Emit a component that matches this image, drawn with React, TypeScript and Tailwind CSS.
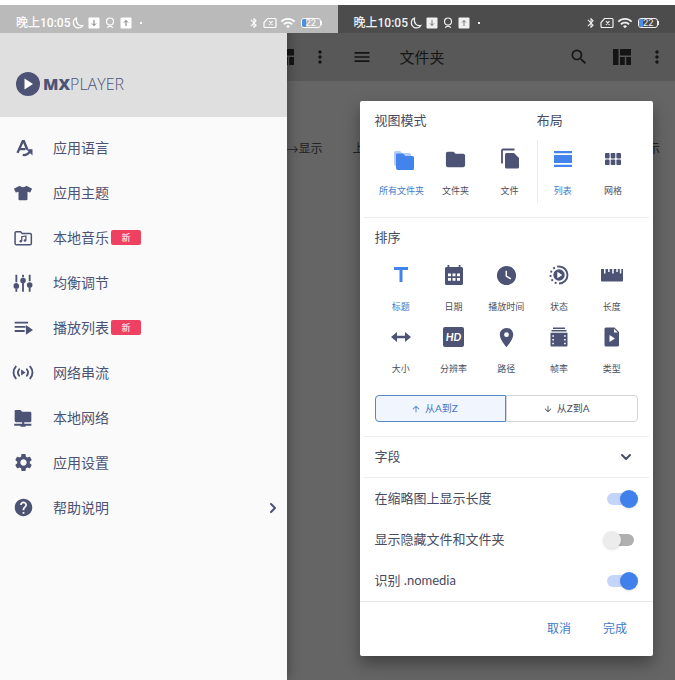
import { useState } from 'react'
import type { ReactNode } from 'react'
import clsx from 'clsx'
import {
  MdArrowDownward,
  MdArrowUpward,
  MdBluetooth,
  MdFolder,
  MdHelp,
  MdMenu,
  MdMoreVert,
  MdPlace,
  MdSearch,
  MdSettings,
  MdTitle,
  MdWatchLater,
  MdWifi
} from 'react-icons/md'
import { FaTshirt } from 'react-icons/fa'
import { ChevronDown, ChevronRight } from 'lucide-react'

/* Icons */

const LanguageIcon = () => (
  <svg viewBox="0 0 24 24" className="ml-1 size-5" fill="none" stroke="currentColor">
    <path d="M2 18.500 9 3h1.500l4.500 11M5.500 13.500h7" strokeWidth="3.200" />
    <path d="M9 21.200c4.500.8 7-1 9-3.700" strokeWidth="3" />
    <path d="M13.500 13.500H22V22Z" fill="currentColor" stroke="none" />
  </svg>
)

const MusicFolderIcon = () => (
  <svg viewBox="0 0 24 24" className="size-5" fill="none" stroke="currentColor" strokeWidth="1.800">
    <path d="M4 4.500h5l2 2h9.500A1.500 1.500 0 0 1 22 8v10.500a1.500 1.500 0 0 1-1.500 1.500H4a1.500 1.500 0 0 1-1.500-1.500V6A1.500 1.500 0 0 1 4 4.500Z" />
    <path d="M10.500 16v-5.500l5-1V15" strokeWidth="1.500" />
    <circle cx="9.300" cy="16" r="1.500" fill="currentColor" stroke="none" />
    <circle cx="14.300" cy="15" r="1.500" fill="currentColor" stroke="none" />
  </svg>
)

const EqualizerIcon = () => (
  <svg viewBox="0 0 24 24" className="size-5" fill="currentColor" stroke="currentColor" strokeWidth="2.200">
    <path d="M4 2v9M4 19v3.500M12 2v3M12 12v10.500M20 2v8M20 18v4.500" />
    <circle cx="4" cy="15.500" r="2.300" />
    <circle cx="12" cy="9" r="2.300" />
    <circle cx="20" cy="14.500" r="2.300" />
  </svg>
)

const PlaylistIcon = () => (
  <svg viewBox="0 0 24 24" className="size-5" fill="currentColor">
    <path d="M2 4.500h16v2.200H2zM2 9.500h13v2.200H2zM2 14.500h12v2.200H2zM15.500 8.500l8.500 6-8.500 5.500z" />
  </svg>
)

const StreamIcon = () => (
  <svg viewBox="0 0 26 20" className="h-[17px] w-[22px]" fill="none" stroke="currentColor" strokeWidth="2.200" strokeLinecap="round">
    <path d="M4.500 3c-3.600 4-3.600 10 0 14M21.500 3c3.600 4 3.600 10 0 14" />
    <path d="M8.500 6.200c-1.800 2.300-1.800 5.300 0 7.600M17.500 6.200c1.800 2.300 1.800 5.300 0 7.600" />
    <path d="M10.800 6.500 16 10l-5.200 3.500Z" fill="currentColor" stroke="none" />
  </svg>
)

const NetworkFolderIcon = () => (
  <svg viewBox="0 0 24 24" className="size-5" fill="currentColor">
    <path d="M3 2.500h6l2 2h9.500A1.500 1.500 0 0 1 22 6v9.500a1.500 1.500 0 0 1-1.500 1.500H4a2 2 0 0 1-2-2V3.500a1 1 0 0 1 1-1ZM11 17h2.500v2H22v2.200h-7v1.300H9v-1.300H1.500V19H11Z" />
  </svg>
)

const QuiltIcon = () => (
  <svg viewBox="0 0 18 16" className="h-4 w-[18px]" fill="currentColor">
    <path d="M0 0h5.500v16H0zM7 0h11v6.500H7zM7 8h4.800v8H7zM13.200 8H18v8h-4.800z" />
  </svg>
)

const AllFoldersIcon = () => (
  <svg viewBox="0 0 24 24" className="mt-1 ml-1 size-6" fill="currentColor">
    <path d="M3.500 2H8l2 2h7.500A1.500 1.500 0 0 1 19 5.500V17H4a2 2 0 0 1-2-2V3.500A1.500 1.500 0 0 1 3.500 2Z" opacity="0.400" />
    <path d="M5 4.500h6L13.300 7H20.500A1.500 1.500 0 0 1 22 8.500v11a1.500 1.500 0 0 1-1.500 1.500H6a2 2 0 0 1-2-2V5.500a1 1 0 0 1 1-1Z" />
  </svg>
)

const FilesIcon = () => (
  <svg viewBox="0 0 20 22" className="h-[22px] w-5" fill="currentColor">
    <path d="M2 15.500V2.500A1 1 0 0 1 3 1.500h11.500" fill="none" stroke="currentColor" strokeWidth="1.800" />
    <path d="M6.500 5H14l5 5v9a1.500 1.500 0 0 1-1.500 1.500h-11A1.500 1.500 0 0 1 5 19V6.500A1.500 1.500 0 0 1 6.500 5Z" />
  </svg>
)

const ListIcon = () => (
  <svg viewBox="0 0 18 18" className="size-[18px]" fill="currentColor">
    <path d="M0 1h18v2.200H0zM0 5h18v8H0zM0 14.800h18V17H0z" />
  </svg>
)

const GridIcon = () => (
  <svg viewBox="0 0 16 12" className="h-3 w-4" fill="currentColor">
    <rect width="4.600" height="5.400" rx="0.800" />
    <rect x="5.700" width="4.600" height="5.400" rx="0.800" />
    <rect x="11.400" width="4.600" height="5.400" rx="0.800" />
    <rect y="6.600" width="4.600" height="5.400" rx="0.800" />
    <rect x="5.700" y="6.600" width="4.600" height="5.400" rx="0.800" />
    <rect x="11.400" y="6.600" width="4.600" height="5.400" rx="0.800" />
  </svg>
)

const CalendarIcon = () => (
  <svg viewBox="0 0 20 22" className="h-[22px] w-5">
    <path d="M3.500 1h1.800v2h9.400V1h1.800v2h1A1.500 1.500 0 0 1 19 4.500v15a1.500 1.500 0 0 1-1.500 1.500h-15A1.500 1.500 0 0 1 1 19.500v-15A1.500 1.500 0 0 1 2.500 3h1Z" fill="currentColor" />
    <path d="M4 9.500h3v2.800H4zM8.500 9.500h3v2.800h-3zM13 9.500h3v2.800h-3zM4 14h3v2.800H4zM8.500 14h3v2.800h-3zM13 14h3v2.800h-3z" fill="white" />
  </svg>
)

const StatusIcon = () => (
  <svg viewBox="0 0 20 20" className="size-5" fill="none" stroke="currentColor">
    <path d="M10 1.500a8.500 8.500 0 0 1 0 17" strokeWidth="1.900" />
    <path d="M10 18.500a8.500 8.500 0 0 1 0-17" strokeWidth="1.900" strokeDasharray="2 2.450" strokeDashoffset="-2.450" />
    <circle cx="10" cy="10" r="5.700" fill="currentColor" stroke="none" />
    <path d="M8.300 6.800 13.300 10l-5 3.200Z" fill="white" stroke="none" />
  </svg>
)

const RulerIcon = () => (
  <svg viewBox="0 0 24 16" className="h-4 w-6" fill="currentColor">
    <path d="M1 2h3v4.500h1.500V2h2.600v3h1.500V2h2.600v4.500h1.500V2h2.600v3h1.500V2h2v4.500h1.500V2H23v11.500a1 1 0 0 1-1 1H2a1 1 0 0 1-1-1Z" />
  </svg>
)

const SizeIcon = () => (
  <svg viewBox="0 0 22 12" className="h-3 w-[22px]" fill="currentColor">
    <path d="M1 6 7 1v3.700h8V1l6 5-6 5V7.300H7V11Z" />
  </svg>
)

const HdIcon = () => (
  <span className="flex h-5 w-[21px] items-center justify-center rounded-xs bg-[#4c5374] text-[11px] font-bold italic text-white">
    HD
  </span>
)

const FrameRateIcon = () => (
  <svg viewBox="0 0 18 20" className="h-5 w-[18px]">
    <path d="M3 .5h12V2H3zM1.500 3h15v1.600h-15zM.5 5.800h17v12.700a1 1 0 0 1-1 1h-15a1 1 0 0 1-1-1Z" fill="currentColor" />
    <path d="M2.300 8.200h1.600v1.600H2.300zM2.300 12h1.600v1.600H2.300zM2.300 15.700h1.600v1.600H2.300zM14.100 8.200h1.600v1.600h-1.600zM14.100 12h1.600v1.600h-1.600zM14.100 15.700h1.600v1.600h-1.600z" fill="white" />
  </svg>
)

const FileTypeIcon = () => (
  <svg viewBox="0 0 16 20" className="h-5 w-4">
    <path d="M2 .5h8.500L15 5v13a1.500 1.500 0 0 1-1.500 1.500H2A1.500 1.500 0 0 1 .5 18V2A1.500 1.500 0 0 1 2 .5Z" fill="currentColor" />
    <path d="M10 1.700V5.500h3.800ZM5.500 8l5.500 3.500L5.500 15z" fill="white" />
  </svg>
)

const LogoMark = () => (
  <svg viewBox="0 0 24 24" className="size-6">
    <circle cx="12" cy="12" r="12" fill="currentColor" />
    <path d="M8.500 6.500 17 12l-8.500 5.500Z" fill="white" />
  </svg>
)

const MoonIcon = () => (
  <svg viewBox="0 0 12 12" className="size-3" fill="none" stroke="currentColor" strokeWidth="1.200">
    <path d="M4.500 1C.5 2.500.3 8 3.800 10.200c2.500 1.500 5.800.6 7-1.700C6.800 9.500 3.500 6.500 4.500 1Z" />
  </svg>
)

const SquareArrow = ({ up }: { up?: boolean }) => (
  <svg viewBox="0 0 12 12" className="size-3">
    <rect x="0.500" y="0.500" width="11" height="11" rx="1" fill="currentColor" />
    <path d={up ? 'M6 9V3.500M4 5.500l2-2 2 2' : 'M6 3v5.500M4 6.500l2 2 2-2'} className="stroke-[#777]" fill="none" />
  </svg>
)

const BeaconIcon = () => (
  <svg viewBox="0 0 12 12" className="size-3" fill="none" stroke="currentColor" strokeWidth="1.200">
    <circle cx="6" cy="4.500" r="3.500" />
    <path d="M3 10.500 6 9l3 1.500" />
  </svg>
)

const NoSimIcon = () => (
  <svg viewBox="0 0 14 12" className="h-3 w-[14px]" fill="none" stroke="currentColor" strokeWidth="1.200">
    <path d="M4.500 1.500H12a1 1 0 0 1 1 1v7a1 1 0 0 1-1 1H2a1 1 0 0 1-1-1V5.500ZM6 4.200l3.500 3.600M9.500 4.200 6 7.800" />
  </svg>
)

/* Screen chrome */

function StatusBar({ light }: { light?: boolean }) {
  return (
    <div
      className={clsx(
        'relative z-10 flex h-7 items-center justify-between px-4 pt-2',
        light ? 'bg-[#bababa] text-white' : 'bg-[#4c4c4c] text-[#f0f0f0]'
      )}
    >
      <div className="flex items-center gap-1">
        <span className="-mr-0.5 font-[Roboto,'Noto_Sans_CJK_SC',sans-serif] text-xs font-medium">晚上10:05</span>
        <MoonIcon />
        <SquareArrow />
        <BeaconIcon />
        <SquareArrow up />
        <span className="ml-1 size-0.5 bg-current" />
      </div>
      <div className="flex items-center gap-[3px]">
        <MdBluetooth className="size-3" />
        <NoSimIcon />
        <MdWifi className="size-4" />
        <div className="ml-0.5 flex items-center">
          <div className="flex h-[10px] w-5 overflow-hidden rounded-[3px] border border-current">
            <span className="w-1 bg-[#4a8fe0]" />
            <span className="text-[9px] leading-[8px]">22</span>
          </div>
          <span className="h-1 w-px bg-current" />
        </div>
      </div>
    </div>
  )
}

function Screen({ light, children }: { light?: boolean; children: ReactNode }) {
  return (
    <section className="relative flex flex-col overflow-hidden bg-[#656565]">
      <StatusBar light={light} />
      <header className="flex h-12 items-center bg-[#585858] pl-[14px] pr-2 text-[#151515]">
        <button aria-label="菜单">
          <MdMenu className="size-5" />
        </button>
        <h1 className="ml-7 flex-1 text-[15px]">文件夹</h1>
        <button aria-label="搜索">
          <MdSearch className="size-5" />
        </button>
        <button aria-label="视图" className="ml-6">
          <QuiltIcon />
        </button>
        <button aria-label="更多" className="ml-4">
          <MdMoreVert className="size-5" />
        </button>
      </header>
      <div className="mt-14 flex justify-between px-[15px] text-xs leading-6 text-[#222]">
        <span>上</span>
        <span>→显示</span>
      </div>
      {children}
    </section>
  )
}

/* Drawer */

const menuItems = [
  { label: '应用语言', icon: <LanguageIcon /> },
  { label: '应用主题', icon: <FaTshirt className="size-[18px]" /> },
  { label: '本地音乐', icon: <MusicFolderIcon />, isNew: true },
  { label: '均衡调节', icon: <EqualizerIcon /> },
  { label: '播放列表', icon: <PlaylistIcon />, isNew: true },
  { label: '网络串流', icon: <StreamIcon /> },
  { label: '本地网络', icon: <NetworkFolderIcon /> },
  { label: '应用设置', icon: <MdSettings className="size-[21px]" /> },
  { label: '帮助说明', icon: <MdHelp className="size-[21px]" />, more: true }
]

function Drawer() {
  return (
    <aside className="absolute inset-y-0 left-0 w-[85%] bg-[#fafafa] pt-7 text-[#4c5374] shadow-[0_0_12px_rgba(0,0,0,0.4)]">
      <div className="flex h-[84px] items-center bg-[#dfdfdf] pl-4 pt-[18px]">
        <LogoMark />
        <div className="ml-[3px] font-['Open_Sans',sans-serif] text-base">
          <span className="font-extrabold">MX</span>
          <span className="font-light">PLAYER</span>
        </div>
      </div>
      <nav className="pt-2">
        {menuItems.map((item) => (
          <a key={item.label} href="#" className="flex h-[45px] items-center pl-3 pr-1 text-sm">
            <span className="flex w-[22px] justify-center">{item.icon}</span>
            <span className="ml-[19px]">{item.label}</span>
            {item.isNew && (
              <span className="ml-0.5 w-[30px] rounded-xs bg-[#ee4060] text-center text-[9px] leading-[15px] text-white">
                新
              </span>
            )}
            {item.more && <ChevronRight className="ml-auto mr-0.5 size-4" strokeWidth={3} />}
          </a>
        ))}
      </nav>
    </aside>
  )
}

/* View dialog */

type Option = { label: string; icon: ReactNode }

const viewOptions: Option[] = [
  { label: '所有文件夹', icon: <AllFoldersIcon /> },
  { label: '文件夹', icon: <MdFolder className="size-[23px]" /> },
  { label: '文件', icon: <FilesIcon /> }
]

const layoutOptions: Option[] = [
  { label: '列表', icon: <ListIcon /> },
  { label: '网格', icon: <GridIcon /> }
]

const sortOptions: Option[] = [
  { label: '标题', icon: <MdTitle className="size-6" /> },
  { label: '日期', icon: <CalendarIcon /> },
  { label: '播放时间', icon: <MdWatchLater className="size-[23px]" /> },
  { label: '状态', icon: <StatusIcon /> },
  { label: '长度', icon: <RulerIcon /> },
  { label: '大小', icon: <SizeIcon /> },
  { label: '分辨率', icon: <HdIcon /> },
  { label: '路径', icon: <MdPlace className="size-[23px]" /> },
  { label: '帧率', icon: <FrameRateIcon /> },
  { label: '类型', icon: <FileTypeIcon /> }
]

function OptionButton({ option, active, onClick }: { option: Option; active: boolean; onClick: () => void }) {
  return (
    <button
      onClick={onClick}
      aria-pressed={active}
      className="flex min-w-0 flex-1 flex-col items-center whitespace-nowrap text-[9px] leading-4"
    >
      <span className={clsx('flex h-6 items-center', active ? 'text-[#4283ec]' : 'text-[#4c5374]')}>{option.icon}</span>
      <span className={clsx('mt-3', active ? 'text-[#3f78c8]' : 'text-[#4a4e5e]')}>{option.label}</span>
    </button>
  )
}

function Toggle({ label, defaultChecked }: { label: string; defaultChecked?: boolean }) {
  return (
    <label className="flex h-[41px] items-center justify-between">
      {label}
      <input
        type="checkbox"
        role="switch"
        defaultChecked={defaultChecked}
        className="relative mr-1 h-3 w-[27px] appearance-none rounded-full bg-[#b0b0b0] before:absolute before:-left-1 before:-top-[3px] before:size-[18px] before:rounded-full before:bg-[#ececec] before:shadow-sm checked:bg-[#c3d6f9] checked:before:left-[13px] checked:before:bg-[#4080ea]"
      />
    </label>
  )
}

function ViewDialog() {
  const [view, setView] = useState('所有文件夹')
  const [layout, setLayout] = useState('列表')
  const [sort, setSort] = useState('标题')
  const [ascending, setAscending] = useState(true)

  const orderClass = 'flex flex-1 items-center justify-center gap-1 border pr-3 text-[10px]'
  const selected = 'border-[#5586c9] bg-[#f0f5fe] text-[#3f78c8]'
  const unselected = 'border-[#d3d5da] text-[#4a4e5e]'

  return (
    <div
      role="dialog"
      className="absolute inset-x-[22px] top-24 rounded-xs bg-white text-[13px] text-[#474c62] shadow-[0_8px_16px_rgba(0,0,0,0.35)]"
    >
      <div className="flex px-[15px] pb-[14px] pt-[7px]">
        <div className="flex-[8]">
          <h2 className="leading-6">视图模式</h2>
          <div className="mt-[15px] flex">
            {viewOptions.map((option) => (
              <OptionButton
                key={option.label}
                option={option}
                active={view === option.label}
                onClick={() => setView(option.label)}
              />
            ))}
          </div>
        </div>
        <div className="flex-[5]">
          <h2 className="leading-6">布局</h2>
          <div className="mt-2 flex border-l border-[#ececee] pb-1 pt-[7px]">
            {layoutOptions.map((option) => (
              <OptionButton
                key={option.label}
                option={option}
                active={layout === option.label}
                onClick={() => setLayout(option.label)}
              />
            ))}
          </div>
        </div>
      </div>

      <div className="mx-1 border-t border-[#ececee] px-[11px] pb-[14px] pt-[7px]">
        <h2 className="leading-6">排序</h2>
        <div className="mt-[14px] grid grid-cols-5 gap-y-[10px]">
          {sortOptions.map((option) => (
            <OptionButton
              key={option.label}
              option={option}
              active={sort === option.label}
              onClick={() => setSort(option.label)}
            />
          ))}
        </div>
        <div className="mt-[18px] flex h-[27px]">
          <button
            onClick={() => setAscending(true)}
            className={clsx(orderClass, 'rounded-l', ascending ? selected : unselected)}
          >
            <MdArrowUpward className="size-[10px]" />
            从A到Z
          </button>
          <button
            onClick={() => setAscending(false)}
            className={clsx(orderClass, 'rounded-r', ascending ? unselected : selected)}
          >
            <MdArrowDownward className="size-[10px]" />
            从Z到A
          </button>
        </div>
      </div>

      <div className="mx-1 border-y border-[#ececee] px-[11px]">
        <button className="flex h-10 w-full items-center justify-between">
          字段
          <ChevronDown className="mr-1 size-4" strokeWidth={3} />
        </button>
      </div>

      <div className="px-[15px]">
        <Toggle label="在缩略图上显示长度" defaultChecked />
        <Toggle label="显示隐藏文件和文件夹" />
        <Toggle label="识别 .nomedia" defaultChecked />
      </div>

      <div className="flex justify-end gap-8 border-t border-[#e8e8e8] px-[26px] text-xs text-[#3f78c8]">
        <button className="h-[54px]">取消</button>
        <button className="h-[54px]">完成</button>
      </div>
    </div>
  )
}

export default function App() {
  return (
    <main className="flex min-h-screen flex-col bg-white pt-[5px] font-[Lato,'Noto_Sans_CJK_SC',sans-serif]">
      <div className="grid flex-1 grid-cols-2">
        <Screen light>
          <Drawer />
        </Screen>
        <Screen>
          <ViewDialog />
        </Screen>
      </div>
    </main>
  )
}
